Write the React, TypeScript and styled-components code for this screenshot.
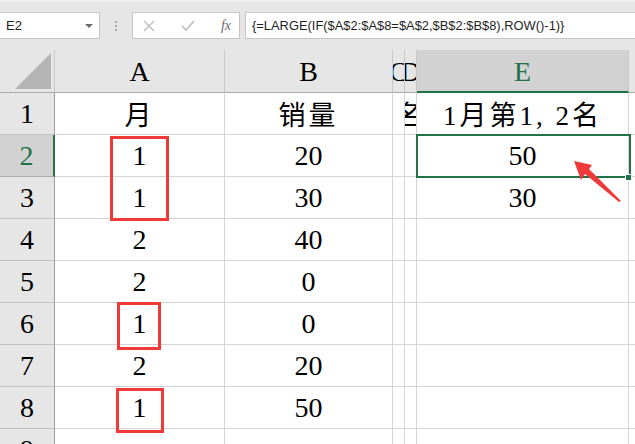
import styled, { createGlobalStyle } from "styled-components";
import { Fragment } from "react";

const GlobalStyle = createGlobalStyle`
  html, body {
    margin: 0;
    padding: 0;
    background: #ffffff;
    overflow: hidden;
  }
  * {
    box-sizing: border-box;
  }
`;

const green = "#217346";
const gridLine = "#d4d4d4";
const cellFont = `"Liberation Serif", "Times New Roman", "Noto Sans CJK SC", serif`;

const columns = ["A", "B", "C", "D", "E", ""];
const colWidths = [55, 170, 168, 12, 12, 212, 60];

const rows: string[][] = [
  ["月", "销量", "", "名", "1月第1, 2名"],
  ["1", "20", "", "", "50"],
  ["1", "30", "", "", "30"],
  ["2", "40", "", "", ""],
  ["2", "0", "", "", ""],
  ["1", "0", "", "", ""],
  ["2", "20", "", "", ""],
  ["1", "50", "", "", ""],
  ["", "", "", "", ""],
];

const hasCjk = (s: string) => /[\u4e00-\u9fff]/.test(s);

const Page = styled.div`
  width: 635px;
  height: 444px;
  overflow: hidden;
  position: relative;
  background: #ffffff;
`;

const TopBar = styled.div`
  height: 50px;
  background: #e6e6e6;
  border-top: 2px solid #f0f0f0;
  display: flex;
  align-items: flex-start;
  padding-top: 10px;
`;

const NameBox = styled.div`
  width: 100px;
  height: 27px;
  background: #ffffff;
  border: 1px solid #c6c6c6;
  border-left: none;
  display: flex;
  align-items: center;
  justify-content: space-between;
  padding: 0 6px 0 6px;
  font-family: "Liberation Sans", Arial, sans-serif;
  font-size: 13px;
  color: #222;
`;

const Caret = styled.span`
  width: 0;
  height: 0;
  border-left: 4px solid transparent;
  border-right: 4px solid transparent;
  border-top: 4px solid #6b6b6b;
`;

const Dots = styled.div`
  width: 32px;
  height: 27px;
  display: flex;
  flex-direction: column;
  align-items: center;
  justify-content: center;
  gap: 2px;
  span {
    width: 2px;
    height: 2px;
    background: #a8a8a8;
  }
`;

const ButtonGroup = styled.div`
  width: 108px;
  height: 27px;
  background: #ffffff;
  border: 1px solid #c6c6c6;
  display: flex;
  align-items: center;
  padding: 0 6px 0 10px;
  justify-content: space-between;
`;

const Fx = styled.span`
  font-family: "Liberation Serif", "Times New Roman", serif;
  font-style: italic;
  font-size: 14px;
  color: #6a6a6a;
  padding-right: 2px;
`;

const FormulaInput = styled.div`
  flex: 1;
  margin-left: 5px;
  height: 27px;
  background: #ffffff;
  border: 1px solid #c6c6c6;
  border-right: none;
  display: flex;
  align-items: center;
  padding-left: 6px;
  font-family: "Liberation Sans", Arial, sans-serif;
  font-size: 12.9px;
  color: #1f1f1f;
  white-space: nowrap;
`;

const Sheet = styled.div`
  display: grid;
  grid-template-columns: ${colWidths.map((w) => `${w}px`).join(" ")};
  grid-template-rows: 43px repeat(9, 42px);
  font-family: ${cellFont};
  font-size: 28px;
`;

const Corner = styled.div`
  background: #e6e6e6;
  border-right: 1px solid #c8c8c8;
  border-bottom: 1px solid #ababab;
  display: flex;
  align-items: flex-end;
  justify-content: flex-end;
  padding: 0 3px 3px 0;
`;

const Triangle = styled.div`
  width: 36px;
  height: 36px;
  background: #b4b4b4;
  clip-path: polygon(100% 0, 100% 100%, 0 100%);
`;

const ColHeader = styled.div<{ $active?: boolean }>`
  background: ${(p) => (p.$active ? "#d2d2d2" : "#e6e6e6")};
  color: ${(p) => (p.$active ? green : "#000")};
  border-right: 1px solid #c8c8c8;
  border-bottom: ${(p) => (p.$active ? `2px solid ${green}` : "1px solid #ababab")};
  display: flex;
  align-items: center;
  justify-content: center;
  overflow: hidden;
  white-space: nowrap;
  padding-top: 2px;
`;

const RowHeader = styled.div<{ $active?: boolean }>`
  background: ${(p) => (p.$active ? "#d2d2d2" : "#e6e6e6")};
  color: ${(p) => (p.$active ? green : "#000")};
  border-right: ${(p) => (p.$active ? `2px solid ${green}` : "1px solid #9e9e9e")};
  border-bottom: 1px solid ${(p) => (p.$active ? "#ababab" : "#c2c2c2")};
  display: flex;
  align-items: center;
  justify-content: center;
`;

const Cell = styled.div<{ $cjk?: boolean }>`
  border-right: 1px solid ${gridLine};
  border-bottom: 1px solid ${gridLine};
  display: flex;
  align-items: center;
  justify-content: center;
  overflow: hidden;
  white-space: nowrap;
  color: #000;
  font-size: ${(p) => (p.$cjk ? "27px" : "28px")};
  letter-spacing: ${(p) => (p.$cjk ? "3px" : "0")};
`;

const Marker = styled.div<{ $x: number; $y: number; $w: number; $h: number }>`
  position: absolute;
  left: ${(p) => p.$x}px;
  top: ${(p) => p.$y}px;
  width: ${(p) => p.$w}px;
  height: ${(p) => p.$h}px;
  border: 3px solid #f03a3a;
  pointer-events: none;
`;

const Selection = styled.div`
  position: absolute;
  left: 416px;
  top: 134px;
  width: 215px;
  height: 44px;
  border: 2px solid ${green};
  pointer-events: none;
`;

const FillHandle = styled.div`
  position: absolute;
  left: 625px;
  top: 174px;
  width: 7px;
  height: 7px;
  background: ${green};
  border: 1px solid #ffffff;
`;

const Overlay = styled.svg`
  position: absolute;
  left: 0;
  top: 0;
  pointer-events: none;
`;

export default function App() {
  return (
    <Page>
      <GlobalStyle />
      <TopBar>
        <NameBox>
          <span>E2</span>
          <Caret />
        </NameBox>
        <Dots>
          <span />
          <span />
          <span />
        </Dots>
        <ButtonGroup>
          <svg width="12" height="12" viewBox="0 0 12 12">
            <path d="M1 1 L11 11 M11 1 L1 11" stroke="#bdbdbd" strokeWidth="1.4" />
          </svg>
          <svg width="14" height="12" viewBox="0 0 14 12">
            <path d="M1 6 L5 10 L13 1" stroke="#bdbdbd" strokeWidth="1.6" fill="none" />
          </svg>
          <Fx>fx</Fx>
        </ButtonGroup>
        <FormulaInput>{"{=LARGE(IF($A$2:$A$8=$A$2,$B$2:$B$8),ROW()-1)}"}</FormulaInput>
      </TopBar>
      <Sheet>
        <Corner>
          <Triangle />
        </Corner>
        {columns.map((c, k) => (
          <ColHeader key={`col${k}`} $active={c === "E"}>
            {c}
          </ColHeader>
        ))}
        {rows.map((r, i) => (
          <Fragment key={`r${i}`}>
            <RowHeader $active={i === 1}>{i + 1}</RowHeader>
            {r.map((v, j) => (
              <Cell key={`c${i}-${j}`} $cjk={hasCjk(v)}>
                {v}
              </Cell>
            ))}
            <Cell />
          </Fragment>
        ))}
      </Sheet>
      <Marker $x={110} $y={136} $w={59} $h={85} />
      <Marker $x={117} $y={302} $w={44} $h={48} />
      <Marker $x={116} $y={388} $w={48} $h={45} />
      <Selection />
      <FillHandle />
      <Overlay width="635" height="444" viewBox="0 0 635 444">
        <polygon
          points="574,161 592,165 589,169 621,201 619,202 585,174 581,180"
          fill="#f03a3a"
        />
      </Overlay>
    </Page>
  );
}
